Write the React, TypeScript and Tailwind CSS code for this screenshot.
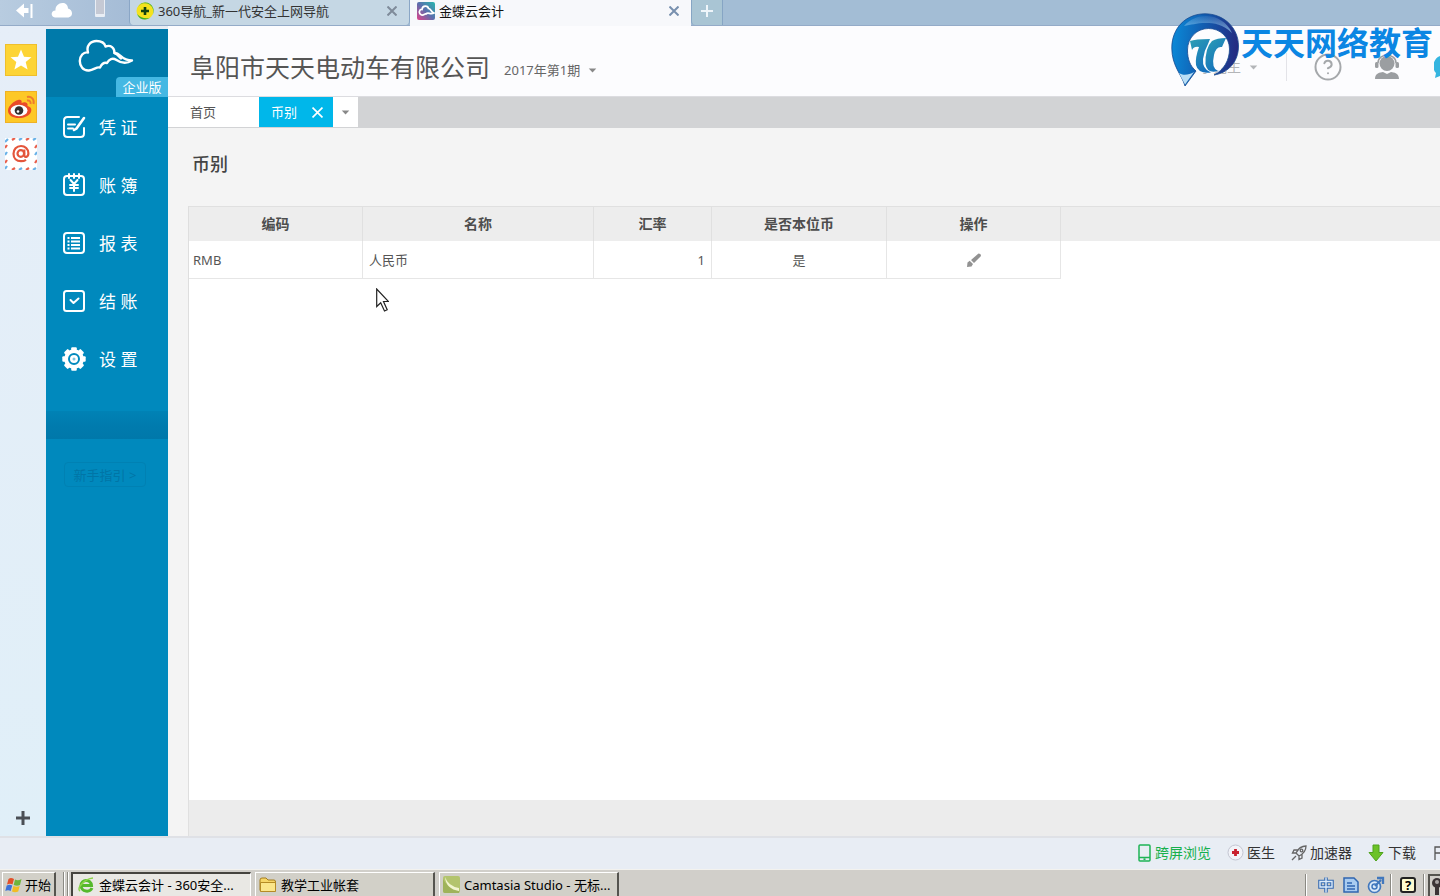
import type { ReactNode } from 'react';
import { CircleHelp } from 'lucide-react';

const CloudLogo = () => (
  <svg viewBox="0 0 56 34" className="h-[34px] w-14" fill="none" stroke="#fff" strokeWidth="2.4" strokeLinejoin="round" strokeLinecap="round" aria-hidden="true">
    <path d="M11 31.500C5 32 1.800 27 1.800 22C1.800 17 5.500 12.500 10 13.500C8 7 12.500 2 18.500 2C23 2 26.500 4 27.500 7.500C33 5.500 36.500 9 36.500 14C42.500 13.500 43 21.500 54 21.500C47.500 25.500 43 24 38.500 21C34.500 18.500 31 20 29 24C25 23 23.500 25.500 22 28.500C18.500 27.500 16 31 11 31.500Z" />
    <path d="M36.500 14C39 14.500 41 17.500 43 19.500" />
  </svg>
);

const VoucherIcon = () => (
  <svg viewBox="0 0 24 24" className="size-6" fill="none" stroke="#fff" strokeWidth="2" strokeLinecap="round" aria-hidden="true">
    <path d="M17 2H5.500Q2 2 2 5.500V18.500Q2 22 5.500 22H18.500Q22 22 22 18.500V13" />
    <path d="M6 9.500H13M6 13.500H11" />
    <path d="M22 3L14.500 13.500L12 15" strokeWidth="2.600" />
  </svg>
);

const LedgerIcon = () => (
  <svg viewBox="0 0 24 24" className="size-6" fill="none" stroke="#fff" strokeWidth="2" strokeLinecap="round" aria-hidden="true">
    <rect x="2" y="3" width="20" height="19" rx="3" />
    <path d="M7 1V5M12 1V5M17 1V5" />
    <path d="M8.500 7L12 11L15.500 7M12 11V18M8 12H16M8 15H16" />
  </svg>
);

const ReportIcon = () => (
  <svg viewBox="0 0 24 24" className="size-6" fill="none" stroke="#fff" strokeWidth="2" aria-hidden="true">
    <rect x="2" y="2" width="20" height="20" rx="3" />
    <path d="M5.500 7H7.500M9 7H18M5.500 10.500H7.500M9 10.500H18M5.500 14H7.500M9 14H18M5.500 17.500H7.500M9 17.500H18" strokeWidth="2" />
  </svg>
);

const ClosingIcon = () => (
  <svg viewBox="0 0 24 24" className="size-6" fill="none" stroke="#fff" strokeWidth="2" strokeLinecap="round" strokeLinejoin="round" aria-hidden="true">
    <rect x="2" y="2" width="20" height="20" rx="2.500" />
    <path d="M8.500 11L11.500 14L16.500 9.500" />
  </svg>
);

const SettingsIcon = () => (
  <svg viewBox="0 0 24 24" className="size-6" aria-hidden="true">
    <g fill="#fff">
      <circle cx="12" cy="12" r="9.800" />
      <rect x="9.200" y="0.300" width="5.600" height="23.400" rx="1" />
      <rect x="9.200" y="0.300" width="5.600" height="23.400" rx="1" transform="rotate(45 12 12)" />
      <rect x="9.200" y="0.300" width="5.600" height="23.400" rx="1" transform="rotate(90 12 12)" />
      <rect x="9.200" y="0.300" width="5.600" height="23.400" rx="1" transform="rotate(135 12 12)" />
    </g>
    <circle cx="12" cy="12" r="5" fill="#fff" stroke="#0089bd" strokeWidth="2" />
    <circle cx="12" cy="12" r="1.500" fill="#7cc4df" />
  </svg>
);

const Caret = ({ className }: { className: string }) => (
  <svg viewBox="0 0 10 6" className={className} fill="currentColor" aria-hidden="true">
    <path d="M0.500 0.500H9.500L5 5.500Z" />
  </svg>
);

const Cross = ({ className }: { className: string }) => (
  <svg viewBox="0 0 10 10" className={className} fill="none" stroke="currentColor" aria-hidden="true">
    <path d="M0.500 0.500L9.500 9.500M9.500 0.500L0.500 9.500" />
  </svg>
);

const Star = () => (
  <svg viewBox="0 0 32 32" className="size-8" aria-hidden="true">
    <rect x="0.500" y="0.500" width="31" height="31" fill="#fdd436" stroke="#efbf2c" />
    <path d="M16 5.500L19 12.700L26.500 13.200L20.700 18L22.600 25.500L16 21.400L9.400 25.500L11.300 18L5.500 13.200L13 12.700Z" fill="#fff" />
  </svg>
);

const Weibo = () => (
  <svg viewBox="0 0 32 32" className="size-8" aria-hidden="true">
    <rect x="0.500" y="0.500" width="31" height="31" fill="#fdc827" stroke="#efb125" />
    <path d="M13 9C15 8 17.500 9 16.500 12C20 10.500 23.500 11.500 22.500 15C26 16 27 18 26 21C24 25 19 27 14 27C8 27 3 24.500 3 19.500C3 15 9 10 13 9Z" fill="#ea4b28" />
    <ellipse cx="14" cy="19.500" rx="8.500" ry="5.700" fill="#fff" />
    <circle cx="14" cy="19.500" r="4.300" fill="#33302f" />
    <circle cx="13" cy="20.500" r="1.300" fill="#fff" />
    <path d="M22 9.500C24.500 9 26 10.500 25.500 13M22 6C26.500 5 29.500 8.500 28.500 13" fill="none" stroke="#ee7b2f" strokeWidth="2" />
  </svg>
);

const Mail = () => (
  <svg viewBox="0 0 32 32" className="size-8" aria-hidden="true">
    <rect width="32" height="32" fill="#fff" />
    <g strokeWidth="2.200" fill="none">
      <path d="M7 2L10 0M21 2L24 0M7 32L10 30M21 32L24 30M0 10L2 7M0 25L2 22M30 10L32 7M30 25L32 22" stroke="#e8604d" />
      <path d="M14 2L17 0M28 2L31 0M14 32L17 30M28 32L31 30M0 17L2 14M0 31L2 28M30 17L32 14M0 4L3 1" stroke="#69b2e8" />
    </g>
    <g fill="none" stroke="#e4553b" strokeWidth="2.200">
      <circle cx="15.800" cy="15.500" r="3.300" />
      <path d="M19.300 11.500V17C19.300 20 23.400 19.500 23.400 15.300C23.400 11 20 8 16 8C11.500 8 8.500 11.300 8.500 15.700C8.500 20.300 11.500 23.200 16 23.200C18 23.200 19.500 22.800 21 21.800" />
    </g>
  </svg>
);

const Pencil = () => (
  <svg viewBox="0 0 16 16" className="size-4" fill="#929292" aria-hidden="true">
    <path d="M12.500 1.500Q15.500 1.500 14.800 4.300L8 11L5 8ZM3.700 8.700L7 12L5.500 14.500L1 15L1.500 10.500Z" />
  </svg>
);

const BrandPin = () => (
  <svg viewBox="0 0 70 74" className="h-[74px] w-[70px]" aria-hidden="true">
    <defs>
      <linearGradient id="ring" x1="0" y1="0.300" x2="1" y2="0.400">
        <stop offset="0" stopColor="#0b8ad8" />
        <stop offset="0.500" stopColor="#1259ad" />
        <stop offset="1" stopColor="#252a80" />
      </linearGradient>
      <linearGradient id="shine" x1="0" y1="0" x2="0" y2="1">
        <stop offset="0" stopColor="#b9e2fa" stopOpacity="0.100" />
        <stop offset="1" stopColor="#9ad4f5" stopOpacity="0.700" />
      </linearGradient>
      <linearGradient id="mono" x1="0" y1="0" x2="0.600" y2="1">
        <stop offset="0" stopColor="#2d9fb4" />
        <stop offset="1" stopColor="#1470bd" />
      </linearGradient>
    </defs>
    <circle cx="37.500" cy="36.500" r="23" fill="#fdfdff" />
    <path d="M34 0.800C53 0.800 67.500 15 67.500 33C67.500 49 57 60 43 62C53 57 58.500 47 58.500 36C58.500 24 49 15.500 37.500 15.500C25.500 15.500 16.500 25 16.500 37C16.500 46 19 53 25 58L14 73C11 62 0.800 53 0.800 35C0.800 15 15 0.800 34 0.800Z" fill="url(#ring)" stroke="#17498f" strokeWidth="0.800" />
    <path d="M13 13C19 6 27 3 35 3C46 3 56 9 61 20C52 11 43 10 35 10C25 10 20 12 13 13Z" fill="url(#shine)" />
    <path d="M8 60C12 63 18 62 23 59L14 71.500Z" fill="#b9def5" />
    <path d="M19 28Q24 26 39 26L37 31Q33 38 32 46Q31 56 40 59.500Q27 61 25 52Q24 45 28 34Q23 33 21 37Z" fill="url(#mono)" />
    <path d="M55 25L51 34Q45 33 43 42Q40 55 47 58Q36 61 34.500 51Q34 35 41 28Q46 25 55 25Z" fill="url(#mono)" />
  </svg>
);

const Cursor = () => (
  <svg viewBox="0 0 13 24" className="absolute left-[187px] top-[82px] h-6 w-[13px]" aria-hidden="true">
    <path d="M0.700 1V18.500L4.700 14.700L8.500 23L11.200 21.800L7.500 13.500H12.500Z" fill="#fff" stroke="#222" strokeWidth="1.200" />
  </svg>
);

const navItems: { label: string; icon: ReactNode }[] = [
  { label: '凭 证', icon: <VoucherIcon /> },
  { label: '账 簿', icon: <LedgerIcon /> },
  { label: '报 表', icon: <ReportIcon /> },
  { label: '结 账', icon: <ClosingIcon /> },
  { label: '设 置', icon: <SettingsIcon /> },
];

function BrowserTabs() {
  return (
    <header className="flex h-[26px] shrink-0 border-b border-[#94abc8] bg-[#a3bdd5]">
      <div className="flex w-[129px] shrink-0 items-start bg-gradient-to-r from-[#b8cce0] to-[#a5bcd6]">
        <button aria-label="后退" className="ml-4 mt-[3px]">
          <svg viewBox="0 0 18 16" className="h-4 w-[18px]" fill="#fff"><path d="M0 7.500L8 0.500V5H12.500V10H8V14.500ZM14.500 1H16.500V15H14.500Z" /></svg>
        </button>
        <button aria-label="云同步" className="ml-[17px] mt-[2px]">
          <svg viewBox="0 0 22 16" className="h-4 w-[22px]" fill="#fff"><path d="M4 15.500C-1 14.500 0 8.500 4.500 8.500C4 4 8 0.500 12 1C15 1 17 3.500 17 6.500C22 7.500 22.500 14.500 17.500 15.500Z" /></svg>
        </button>
        <button aria-label="手机" className="ml-[21px]">
          <svg viewBox="0 0 12 18" className="h-[18px] w-3"><rect x="1" y="-3" width="10" height="20" rx="1" fill="#e9eef5" /><rect x="2" y="0" width="8" height="14" fill="#c5c9d4" /></svg>
        </button>
      </div>
      <div className="flex w-[281px] shrink-0 items-center rounded-b border-x border-[#8aa6c6] bg-[#c5d7e4] pl-[6px] pr-2 pb-1">
        <svg viewBox="0 0 18 18" className="size-[18px]" aria-hidden="true">
          <circle cx="9" cy="9" r="8.500" fill="#f4e21e" />
          <path d="M9 0.500A8.500 8.500 0 0 1 16 14A8 8 0 0 0 2 5A8.500 8.500 0 0 1 9 0.500Z" fill="#3fae2a" />
          <path d="M9 17.500A8.500 8.500 0 0 1 1 12Q7 18 14 15.700A8.500 8.500 0 0 1 9 17.500Z" fill="#3fae2a" />
          <path d="M9 5V13M5 9H13" stroke="#12420f" strokeWidth="2.600" />
        </svg>
        <span className="ml-1 flex-1 truncate text-[#333]">360导航_新一代安全上网导航</span>
        <button aria-label="关闭标签页" className="p-1 text-[#7f8b9a]"><Cross className="size-[10px] stroke-2" /></button>
      </div>
      <div className="-mb-px flex w-[281px] shrink-0 items-center bg-[#f7f8fb] pb-1 pl-[7px] pr-2">
        <svg viewBox="0 0 18 18" className="size-[18px]" aria-hidden="true">
          <defs>
            <linearGradient id="fav" x1="1" y1="0" x2="0" y2="1"><stop offset="0" stopColor="#27b7ae" /><stop offset="0.500" stopColor="#5b6fae" /><stop offset="1" stopColor="#e2418a" /></linearGradient>
          </defs>
          <rect width="18" height="18" rx="2" fill="url(#fav)" />
          <path d="M4.500 13C0.500 11 3 7 5 7.500C5.500 3 11 3.500 11.500 6.500C14 6.500 14 10 17 11C13 13 11 9.500 9 12C8 11.500 7 13.500 4.500 13Z" fill="none" stroke="#fff" strokeWidth="1.700" />
        </svg>
        <span className="ml-1 flex-1 truncate text-[#111]">金蝶云会计</span>
        <button aria-label="关闭标签页" className="p-1 text-[#7890ae]"><Cross className="size-[10px] stroke-2" /></button>
      </div>
      <button aria-label="新建标签页" className="flex w-8 shrink-0 items-center justify-center rounded-bl border-x border-[#86a5c4] bg-[#a9c5d4] pb-1">
        <svg viewBox="0 0 12 12" className="size-3" stroke="#eef5fa" strokeWidth="2"><path d="M6 0V12M0 6H12" /></svg>
      </button>
    </header>
  );
}

function SideRail() {
  return (
    <aside className="flex w-[46px] shrink-0 flex-col bg-gradient-to-b from-[#e6eef8] to-[#e0eff8] pl-[5px]">
      <div className="flex flex-col gap-[15px] pt-[18px]">
        <button aria-label="收藏"><Star /></button>
        <button aria-label="微博"><Weibo /></button>
        <button aria-label="邮箱"><Mail /></button>
      </div>
      <button aria-label="添加" className="mb-[10px] ml-[10px] mt-auto self-start">
        <svg viewBox="0 0 16 16" className="size-4" stroke="#4a4f55" strokeWidth="3"><path d="M8 1V15M1 8H15" /></svg>
      </button>
    </aside>
  );
}

function Sidebar() {
  return (
    <nav className="mt-[3px] w-[122px] shrink-0 bg-[#0089bd]">
      <div className="flex h-[68px] flex-col bg-[#007aaa]">
        <div className="pl-8 pt-[10px]"><CloudLogo /></div>
        <span className="mt-auto flex h-5 w-[52px] items-center justify-center self-end rounded-tl-sm bg-[#45b8e3] text-white">企业版</span>
      </div>
      <div className="flex flex-col pt-px">
        {navItems.map((item) => (
          <a key={item.label} href="#" className="flex h-[58px] items-center gap-[13px] pl-4 text-[17px] text-white">
            {item.icon}
            <span className="pt-[2px]">{item.label}</span>
          </a>
        ))}
      </div>
      <div className="mt-[23px] h-7 bg-gradient-to-b from-[#0082b5] via-[#007bae] to-[#0078aa]" />
      <button className="ml-[18px] mt-[23px] flex h-[25px] w-[82px] items-center justify-center rounded border border-[#0081b3] text-[#0075a6]">新手指引 &gt;</button>
    </nav>
  );
}

function UserArea() {
  return (
    <div className="ml-auto flex h-full shrink-0 items-center pt-3">
      <button className="flex items-center gap-2 text-[14px] text-[#b3b5b8]">李先生<Caret className="h-[5px] w-[9px]" /></button>
      <span className="ml-7 h-7 w-px bg-[#e3e3e8]" />
      <button aria-label="帮助" className="ml-[26px] text-[#a5a8ab]"><CircleHelp size={30} strokeWidth={1.6} /></button>
      <button aria-label="客服" className="ml-[30px]">
        <svg viewBox="0 0 28 26" className="h-[26px] w-7" fill="#9b9ea1">
          <circle cx="14" cy="9.500" r="7.500" />
          <path d="M5 9C5 -1.500 23 -1.500 23 9" fill="none" stroke="#9b9ea1" strokeWidth="1.500" />
          <rect x="2" y="8" width="3.500" height="6" rx="1.500" />
          <rect x="22.500" y="8" width="3.500" height="6" rx="1.500" />
          <path d="M2 25C2 19 7 18.500 10 18L14 20L18 18C21 18.500 26 19 26 25Z" />
        </svg>
      </button>
      <button aria-label="消息" className="ml-[33px] h-[22px] w-[6px] overflow-hidden">
        <svg viewBox="0 0 6 22" className="h-[22px] w-[6px]"><path d="M6 0C-2 3 -2 14 2 17L1 22L6 20Z" fill="#35b5e0" /></svg>
      </button>
    </div>
  );
}

function Workspace() {
  const head = 'border-r border-t border-[#e0e0e0] font-bold';
  const cell = 'border-b border-r border-[#e6e6e6]';
  return (
    <main className="flex min-w-0 flex-1 flex-col bg-[#f4f4f4]">
      <div className="flex h-[71px] items-center border-b border-[#dcdce0] bg-[#fcfcfe] pl-[22px]">
        <h1 className="whitespace-nowrap pt-3 text-[25px] leading-8 text-[#555]">阜阳市天天电动车有限公司</h1>
        <button className="ml-[14px] flex items-center gap-2 whitespace-nowrap pt-[18px] text-[#666]">2017年第1期<Caret className="h-[5px] w-[9px] text-[#888]" /></button>
        <UserArea />
      </div>
      <div className="flex h-[31px] bg-[#d2d3d5] pb-px">
        <a href="#" className="flex w-[91px] items-center bg-white pl-[22px] text-[#555]">首页</a>
        <div className="flex w-[74px] items-center justify-between bg-[#00b7ea] pl-3 pr-[10px] text-white">
          <span>币别</span>
          <button aria-label="关闭币别"><Cross className="size-[11px] stroke-[1.5]" /></button>
        </div>
        <button aria-label="更多标签" className="flex w-[25px] items-center justify-center bg-white text-[#888]"><Caret className="h-[5px] w-[9px]" /></button>
      </div>
      <h2 className="pl-6 pt-[22px] text-[18px] leading-7 font-medium text-[#444]">币别</h2>
      <section className="relative ml-5 mt-7 flex-1 border-l border-[#dedede] bg-white">
        <table className="w-full table-fixed border-separate border-spacing-0 text-[#555]">
          <colgroup>
            <col className="w-[174px]" />
            <col className="w-[231px]" />
            <col className="w-[118px]" />
            <col className="w-[175px]" />
            <col className="w-[174px]" />
            <col />
          </colgroup>
          <thead>
            <tr className="h-[35px] bg-[#ededed] text-[14px] text-[#4d4d4d]">
              <th className={head}>编码</th>
              <th className={head}>名称</th>
              <th className={head}>汇率</th>
              <th className={head}>是否本位币</th>
              <th className={head}>操作</th>
              <td className="border-t border-[#e0e0e0]" />
            </tr>
          </thead>
          <tbody>
            <tr className="h-[38px]">
              <td className={`${cell} pl-1`}>RMB</td>
              <td className={`${cell} pl-[6px]`}>人民币</td>
              <td className={`${cell} pr-[6px] text-right`}>1</td>
              <td className={`${cell} text-center`}>是</td>
              <td className={cell}><button aria-label="编辑" className="mx-auto block"><Pencil /></button></td>
              <td />
            </tr>
          </tbody>
        </table>
        <Cursor />
      </section>
      <div className="ml-5 h-9 border-l border-[#e0e0e0] bg-[#ececec]" />
    </main>
  );
}

function StatusBar() {
  return (
    <div className="flex h-[33px] shrink-0 items-center justify-end overflow-hidden border-t-2 border-[#dfe1e6] bg-[#e8edf4] pb-[2px] text-[14px] text-[#333]">
      <button className="flex items-center gap-1 text-[#17b04c]">
        <svg viewBox="0 0 13 18" className="h-[18px] w-[13px]" fill="none" stroke="#1eb455" strokeWidth="1.500"><rect x="1" y="1" width="11" height="16" rx="1" /><path d="M1 13.500H12M5.500 15.300H7.500" /></svg>
        跨屏浏览
      </button>
      <button className="ml-4 flex items-center gap-[3px]">
        <svg viewBox="0 0 17 17" className="size-[17px]"><circle cx="8.500" cy="8.500" r="7.500" fill="#f2f3f8" stroke="#c3c6d2" /><path d="M8.500 5V12M5 8.500H12" stroke="#c8202d" strokeWidth="2.800" /></svg>
        医生
      </button>
      <button className="ml-4 flex items-center gap-[3px]">
        <svg viewBox="0 0 16 16" className="size-4" fill="none" stroke="#666" strokeWidth="1.300"><path d="M15 1C10 1 7 4 5 8L8 11C12 9 15 6 15 1ZM7 5H3L1.500 8H5M11 9V13L8 14.500V11M5 11L1 15" /><circle cx="10.500" cy="5.500" r="1.300" /></svg>
        加速器
      </button>
      <button className="ml-4 flex items-center gap-1">
        <svg viewBox="0 0 16 18" className="h-[18px] w-4"><path d="M5 1H11V8.500H15L8 17L1 8.500H5Z" fill="#6cc227" stroke="#4ea31c" /></svg>
        下载
      </button>
      <button aria-label="标记" className="ml-4 overflow-hidden">
        <svg viewBox="0 0 8 14" className="h-[14px] w-2" fill="none" stroke="#555" strokeWidth="1.300"><path d="M3 14V1H8M3 7H8" /></svg>
      </button>
    </div>
  );
}

function Taskbar() {
  const raised = 'flex items-center border-l border-t border-r-2 border-l-white border-t-white border-r-[#55544f] bg-[#d2d0c8] text-left text-black';
  return (
    <footer className="flex h-[27px] shrink-0 overflow-hidden border-t border-[#f3f2ee] bg-[#d1cfca] pt-[2px] text-black">
      <button className={`${raised} ml-[2px] w-[54px] gap-[2px] pl-[2px]`}>
        <svg viewBox="0 0 18 18" className="size-[18px]" aria-hidden="true">
          <path d="M3.500 3C5.500 1.500 7 2 9 3L7.500 8.500C6 7.500 4 7.500 2 8.500Z" fill="#e2502a" />
          <path d="M10 3.500C12 4.500 14 4.500 16.500 3L15 9C13 10 11 10 8.700 9Z" fill="#6eb43b" />
          <path d="M1.700 9.500C4 8.500 5.500 8.500 7.200 9.500L5.700 15C4 14 2 14 0.300 15Z" fill="#3c72d8" />
          <path d="M8.400 10C10.500 11 12.500 11 14.700 10L13.200 15.500C11 16.500 9 16.500 7 15.500Z" fill="#f1bc23" />
        </svg>
        开始
      </button>
      <span className="ml-[7px] w-[2px] border-l border-[#8a8983] bg-white" />
      <span className="ml-[2px] w-[2px] border-l border-[#8a8983] bg-white" />
      <button className="ml-[2px] flex w-[180px] items-center gap-1 border-l-2 border-t-2 border-r border-l-[#45443f] border-t-[#45443f] border-r-white bg-[#e9e8e4] pl-1 text-left">
        <svg viewBox="0 0 18 18" className="size-[18px] shrink-0" fill="none" aria-hidden="true">
          <path d="M15 12C13 16.500 4.500 16.500 4 9.500C4 3 14 2.500 14.500 9.500H5" stroke="#55b92c" strokeWidth="3" />
          <path d="M3 15C-1 13 7 3 16 2" stroke="#8bd448" strokeWidth="1.500" />
        </svg>
        <span className="truncate">金蝶云会计 - 360安全...</span>
      </button>
      <button className={`${raised} ml-[4px] w-[180px] gap-1 pl-[3px]`}>
        <svg viewBox="0 0 18 16" className="h-4 w-[18px] shrink-0" aria-hidden="true">
          <path d="M1 3Q1 1 3 1H7L9 3H15Q16.500 3 16.500 5V14H2Q1 14 1 13Z" fill="#f6d667" stroke="#a57c1d" />
          <path d="M1.500 5.500H16.500V14.500H1.500Z" fill="#fbe68a" stroke="#b58b25" />
        </svg>
        <span className="truncate">教学工业帐套</span>
      </button>
      <button className={`${raised} ml-[4px] w-[180px] gap-1 pl-[3px]`}>
        <svg viewBox="0 0 17 17" className="size-[17px] shrink-0" aria-hidden="true">
          <rect width="17" height="17" rx="2" fill="#b3c46d" />
          <path d="M0 3Q4 12 16 13V17H2Q0 17 0 15Z" fill="#9fb35a" />
          <path d="M2 1Q5 10 16 12V15Q3 13 2 1Z" fill="#f1f5cf" />
        </svg>
        <span className="truncate">Camtasia Studio - 无标...</span>
      </button>
      <div className="ml-auto flex items-center pt-[2px]">
        <span className="h-full w-[2px] border-l border-[#8a8983] bg-white" />
        <svg viewBox="0 0 18 18" className="ml-[10px] size-[18px]" fill="none" aria-label="中文输入">
          <path d="M3 5.500H15V11H3ZM9 1.500V16.500" stroke="#376bb2" strokeWidth="3.600" />
          <path d="M3 5.500H15V11H3ZM9 1.500V16.500" stroke="#dcebfa" strokeWidth="1.400" />
        </svg>
        <svg viewBox="0 0 18 18" className="ml-[7px] size-[18px]" aria-hidden="true">
          <path d="M2 2H12L16 6V16H2Z" fill="#a8cbf0" stroke="#2f66b0" strokeWidth="1.500" />
          <path d="M5 7H10M5 10H13M5 13H13" stroke="#2f66b0" strokeWidth="1.500" />
        </svg>
        <svg viewBox="0 0 18 18" className="ml-[7px] size-[18px]" aria-hidden="true">
          <circle cx="7.500" cy="10.500" r="6" fill="#dcebfa" stroke="#4278bd" strokeWidth="1.700" />
          <circle cx="7.500" cy="10.500" r="2.500" fill="none" stroke="#4278bd" strokeWidth="1.500" />
          <path d="M8 10L14 4M10 2H16V8" fill="none" stroke="#4278bd" strokeWidth="2.300" />
        </svg>
        <span className="ml-[5px] h-full w-[2px] border-l border-[#8a8983] bg-white" />
        <span className="ml-2 flex h-[16px] w-[16px] items-center justify-center rounded-[3px] border-2 border-[#222] bg-[#fdfbd0] text-[13px] leading-none font-bold">?</span>
        <span className="ml-[7px] h-full w-[2px] border-l border-[#8a8983] bg-white" />
        <span className="ml-[3px] flex h-full w-3 items-center overflow-hidden border-l-2 border-t-2 border-[#55544f]">
          <svg viewBox="0 0 10 18" className="h-[18px] w-[10px] shrink-0" fill="#3b3436" aria-hidden="true"><circle cx="7" cy="6" r="5" /><rect x="5" y="10" width="4" height="8" /><circle cx="7" cy="5" r="2" fill="#a9a4a4" /></svg>
        </span>
      </div>
    </footer>
  );
}

export default function App() {
  return (
    <div className="relative flex min-h-screen flex-col overflow-hidden bg-[#e8edf4] font-['Noto_Sans','Noto_Sans_CJK_SC',sans-serif] text-[13px] leading-5">
      <BrowserTabs />
      <div className="flex flex-1">
        <SideRail />
        <Sidebar />
        <Workspace />
      </div>
      <StatusBar />
      <Taskbar />
      <div className="pointer-events-none absolute right-[7px] top-[13px] flex">
        <BrandPin />
        <span className="pt-3 text-[32px] leading-9 font-bold text-[#0b86e3]">天天网络教育</span>
      </div>
    </div>
  );
}
